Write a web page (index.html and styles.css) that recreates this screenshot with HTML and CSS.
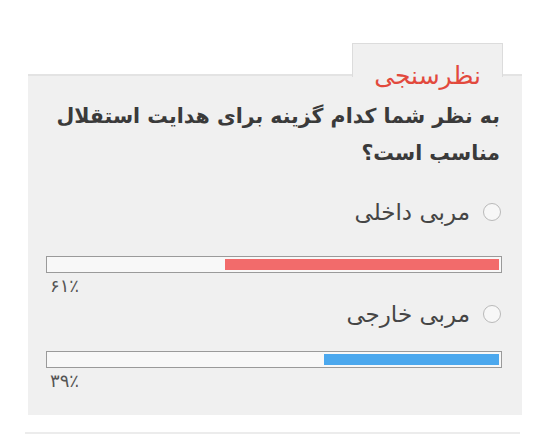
FILE: index.html
```html
<!DOCTYPE html>
<html lang="fa" dir="rtl">
<head>
<meta charset="utf-8">
<link rel="stylesheet" href="styles.css">
</head>
<body>
<div class="panel">
  <div class="tab"><span class="tab-title">نظرسنجی</span></div>
  <div class="question">به نظر شما کدام گزینه برای هدایت استقلال مناسب است؟</div>
  <div class="option option-first">
    <span class="radio"></span>
    <span class="opt-label">مربی داخلی</span>
  </div>
  <div class="bar bar-first"><div class="fill fill-red" style="width:61%"></div></div>
  <div class="pct">۶۱٪</div>
  <div class="option">
    <span class="radio"></span>
    <span class="opt-label">مربی خارجی</span>
  </div>
  <div class="bar"><div class="fill fill-blue" style="width:39%"></div></div>
  <div class="pct">۳۹٪</div>
</div>
<div class="rule"></div>
</body>
</html>
```

FILE: styles.css
```css
html, body {
  margin: 0;
  background: #ffffff;
}
body {
  font-family: "DejaVu Sans", "Noto Sans", sans-serif;
  color: #333;
  width: 550px;
  height: 436px;
  overflow: hidden;
}
.panel {
  margin: 74px 28px 0 28px;
  height: 341px;
  box-sizing: border-box;
  border-top: 2px solid #e3e3e3;
  background: #f0f0f0;
  padding: 0 22px 0 20px;
  display: flex;
  flex-direction: column;
}
.tab {
  align-self: flex-start;
  margin-top: -33px;
  margin-right: -3px;
  width: 151px;
  height: 61px;
  box-sizing: border-box;
  border: 1px solid transparent;
  border-bottom: 0;
  border-image: linear-gradient(to bottom, #dcdcdc 0, #dcdcdc 33px, transparent 33px) 1;
  background: #f0f0f0;
  text-align: center;
  padding-top: 17px;
}
.tab-title {
  font-size: 25px;
  line-height: 30px;
  color: #e2493d;
}
.question {
  margin-top: -6px;
  font-size: 20.5px;
  font-weight: bold;
  line-height: 37px;
  color: #3a3a3a;
}
.option {
  display: flex;
  align-items: center;
  gap: 13px;
  margin-top: 5px;
  margin-right: -1px;
  font-size: 23px;
  line-height: 28px;
  color: #454545;
}
.option-first {
  margin-top: 26px;
}
.radio {
  width: 16px;
  height: 16px;
  border-radius: 50%;
  border: 1px solid #b9b9b9;
  background: #f7f7f7;
  flex: none;
}
.bar {
  margin-top: 23px;
  margin-left: -2px;
  margin-right: -2px;
  height: 17px;
  box-sizing: border-box;
  border: 1px solid #9a9a9a;
  background: #f8f8f8;
  padding: 2px;
  display: flex;
}
.bar-first {
  margin-top: 30px;
}
.fill {
  height: 100%;
}
.fill-red { background: #f26b6b; }
.fill-blue { background: #4ba8ee; }
.pct {
  align-self: flex-end;
  font-size: 18px;
  line-height: 18px;
  margin-top: 4px;
  margin-left: 2px;
  color: #555;
}
.rule {
  margin: 17px 30px 0 25px;
  height: 2px;
  background: #ececec;
}
```
